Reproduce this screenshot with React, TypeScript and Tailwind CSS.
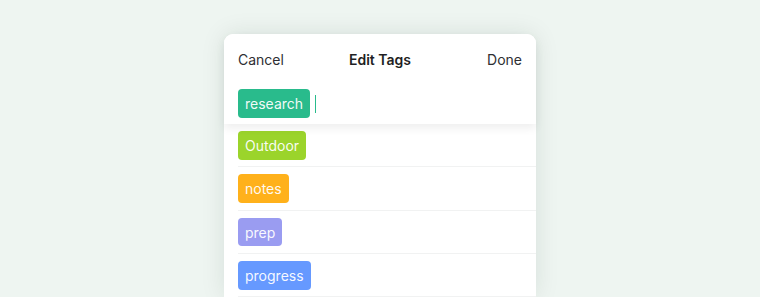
export default function App() {
  const tags = [
    { name: "Outdoor", color: "bg-[#9bd42b]" },
    { name: "notes", color: "bg-[#ffb11b]" },
    { name: "prep", color: "bg-[#9a9cf1]" },
    { name: "progress", color: "bg-[#6699ff]" },
  ];
  return (
    <div
      className="w-[760px] h-[297px] overflow-hidden bg-[#eef5f1] flex justify-center pt-[34px]"
      style={{ fontFamily: "Inter, 'Noto Sans', sans-serif" }}
    >
      <div className="w-[312px] bg-white rounded-t-[9px] shadow-[0_0_24px_rgba(0,40,30,0.10)] flex flex-col">
        <div className="relative z-10 rounded-t-[9px] bg-white shadow-[0_4px_10px_rgba(0,0,0,0.07)] px-[14px] pt-[14px] pb-[6px]">
          <div className="grid grid-cols-[1fr_auto_1fr] items-center h-[22px] text-[14px] text-[#2e2e33]">
            <span>Cancel</span>
            <span className="font-semibold text-[#1f1f23]">Edit Tags</span>
            <span className="text-right">Done</span>
          </div>
          <div className="flex items-center mt-[19px] h-[29px]">
            <span className="h-[28.7px] px-[7px] flex items-center rounded-[4px] bg-[#29bb8c] text-[14px] text-white/95">
              research
            </span>
            <span className="ml-[5px] w-px h-[18px] bg-[#29bb8c]" />
          </div>
        </div>
        <div className="flex flex-col">
          {tags.map((t) => (
            <div key={t.name} className="ml-[14px] h-[43.33px] pt-[7px] border-b border-[#f1f2f2]">
              <span
                className={`inline-flex h-[28.7px] px-[7px] items-center rounded-[4px] ${t.color} text-[14px] text-white/95`}
              >
                {t.name}
              </span>
            </div>
          ))}
        </div>
      </div>
    </div>
  );
}
